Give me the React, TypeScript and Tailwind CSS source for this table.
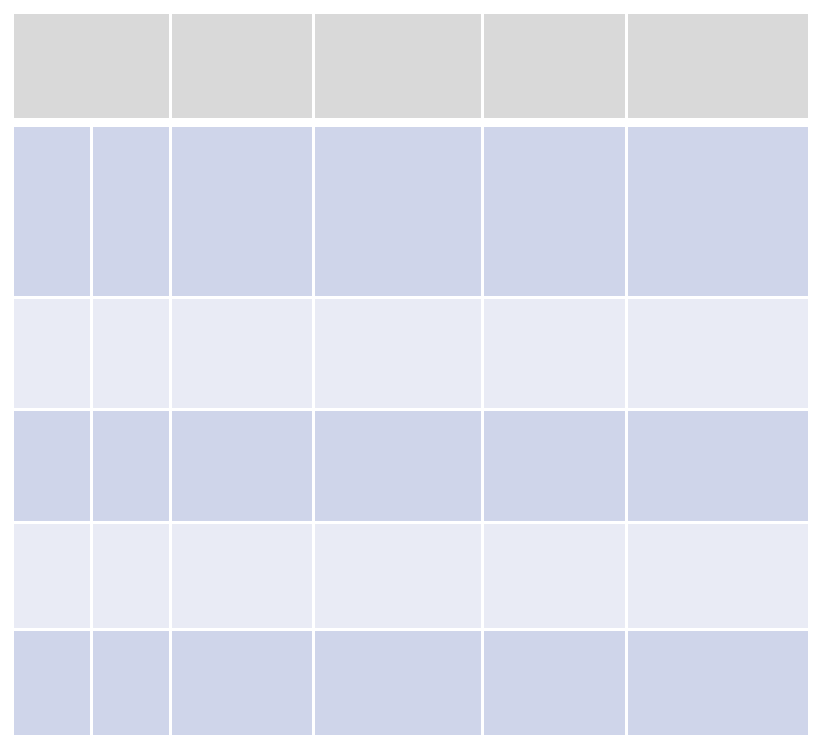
import React from "react"

const cols = "grid grid-cols-[76px_76px_140px_166px_141px_180px] gap-[3px]"

const rows = [
  { h: "h-[169px]", bg: "bg-[#cfd5ea]" },
  { h: "h-[109px]", bg: "bg-[#e9ebf5]" },
  { h: "h-[110px]", bg: "bg-[#cfd5ea]" },
  { h: "h-[104px]", bg: "bg-[#e9ebf5]" },
  { h: "h-[104px]", bg: "bg-[#cfd5ea]" },
]

export default function App() {
  return (
    <div className="min-h-[748px] bg-white pt-[14px] pl-[14px]">
      <div className="flex flex-col gap-[9px]">
        {/* header */}
        <div className={cols}>
          <div className="col-span-2 h-[104px] bg-[#d9d9d9]" />
          <div className="h-[104px] bg-[#d9d9d9]" />
          <div className="h-[104px] bg-[#d9d9d9]" />
          <div className="h-[104px] bg-[#d9d9d9]" />
          <div className="h-[104px] bg-[#d9d9d9]" />
        </div>

        {/* body */}
        <div className={cols}>
          {rows.map((r, i) => (
            <React.Fragment key={i}>
              {Array.from({ length: 6 }).map((_, j) => (
                <div key={j} className={`${r.h} ${r.bg}`} />
              ))}
            </React.Fragment>
          ))}
        </div>
      </div>
    </div>
  )
}
